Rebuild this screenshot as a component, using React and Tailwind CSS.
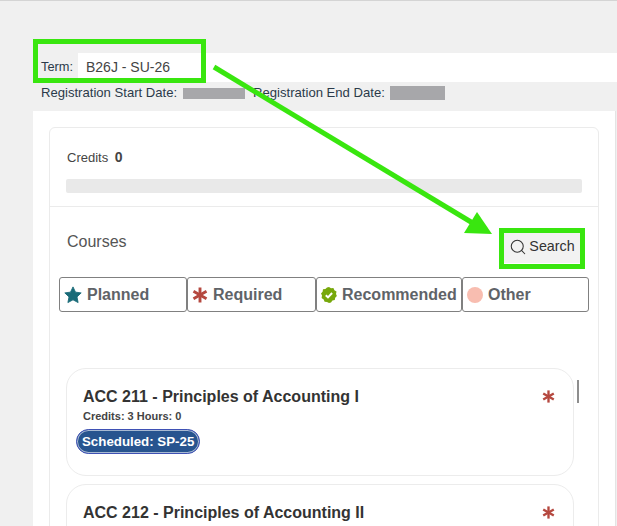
import React from "react";
import { Search } from "lucide-react";

function StarIcon() {
  return (
    <svg width="18" height="18" viewBox="0 0 24 24" className="shrink-0">
      <path
        d="M12 1.2l3.3 7 7.6 1-5.6 5.3 1.5 7.6L12 18.4l-6.8 3.7 1.5-7.6L1.100 9.200l7.600-1z"
        fill="#1a6b78"
        stroke="#1a6b78"
        strokeWidth="1.200"
        strokeLinejoin="round"
      />
    </svg>
  );
}

function AsteriskIcon({ size = 16 }) {
  return (
    <svg width={size} height={size} viewBox="0 0 16 16" className="shrink-0">
      <g stroke="#b5483f" strokeWidth="2.900">
        <path d="M8 0.500v15" />
        <path d="M1.500 4.200l13 7.600" />
        <path d="M14.500 4.200l-13 7.600" />
      </g>
    </svg>
  );
}

function BadgeIcon() {
  return (
    <svg width="16" height="16" viewBox="0 0 16 16" className="shrink-0">
      <path
        d="M8 0l2 1.300 2.400-.2 1 2.200 2.100 1.200-.5 2.400.9 2.100-1.700 1.700-.4 2.400-2.400.5L10 15.500 8 16l-2-.900-2.400-.4-.9-2.300L.6 11l.4-2.400L0 6.500l1.600-1.800.4-2.400 2.400-.4L6 .6z"
        fill="#77a80b"
      />
      <path d="M4.800 8.200l2.200 2.200 4.100-4.400" fill="none" stroke="#fff" strokeWidth="2" />
    </svg>
  );
}

function Tab({ icon, label, className }) {
  return (
    <div className={"flex items-center gap-[5px] h-[35px] border border-[#808080] rounded-[3px] pl-[4px] font-bold text-[16px] text-[#5f6368] " + className}>
      {icon}
      <span>{label}</span>
    </div>
  );
}

function CourseCard({ title, badge }) {
  return (
    <div className="relative h-[108px] shrink-0 rounded-[20px] border border-[#ececec] bg-white pl-[16px] pt-[18px]">
      <div className="flex items-start justify-between pr-[18px]">
        <div className="text-[16px] leading-[20px] font-bold text-[#333333]">{title}</div>
        <div className="mt-[3px]"><AsteriskIcon size={13} /></div>
      </div>
      {badge && (
        <>
          <div className="mt-[2px] text-[11px] leading-[14px] font-bold text-[#444444]">Credits: 3 Hours: 0</div>
          <div className="mt-[6px] -ml-[7px] inline-flex items-center h-[25px] px-[5px] rounded-full border border-[#3f51b5] bg-[#27548f] text-[13.300px] font-bold text-white ring-1 ring-inset ring-white/60">
            {badge}
          </div>
        </>
      )}
    </div>
  );
}

export default function App() {
  return (
    <div
      className="relative h-[526px] w-[617px] overflow-hidden border-t border-[#d4d4d4] bg-[#f0f0f0] text-[#333333]"
      style={{ fontFamily: '"Liberation Sans", Arial, sans-serif' }}
    >
      <div className="pt-[52px]">
        {/* term row */}
        <div className="flex h-[29px] items-stretch pl-[41px]">
          <label className="flex w-[37px] items-center pb-[1px] text-[12.800px] text-[#2b3a4a]">Term:</label>
          <div className="flex flex-1 items-center bg-white pl-[8px] text-[14px] text-[#444444]">B26J - SU-26</div>
        </div>
        {/* registration dates */}
        <div className="flex h-[22px] items-center pl-[41px] text-[13.100px] text-[#2b3a4a]">
          <span>Registration Start Date:</span>
          <span className="ml-[6px] h-[11px] w-[62px] bg-[#a7a7aa]"></span>
          <span className="ml-[8px]">Registration End Date:</span>
          <span className="ml-[5px] h-[14px] w-[55px] bg-[#a7a7aa]"></span>
        </div>
      </div>

      {/* main panel */}
      <div className="ml-[33px] mr-[1px] mt-[7px] h-[420px] border-r border-[#e4e4e4] bg-white pl-[16px] pt-[16px]">
        <div className="w-[550px] h-[500px] rounded-t-[6px] border border-[#ebebeb]">
          <div className="h-[79px] border-b border-[#ebebeb] pl-[17px] pr-[16px] pt-[21px]">
            <div className="text-[13px] leading-[16px] text-[#444444]">
              Credits <span className="ml-[3px] text-[14px] font-bold">0</span>
            </div>
            <div className="-ml-[1px] mt-[13px] h-[14px] rounded-[2px] bg-[#e9e9e9]"></div>
          </div>
          <div className="flex items-start justify-between pl-[17px] pr-[18px]">
            <div className="pt-[25px] text-[16px] leading-[20px] text-[#555555]">Courses</div>
            <button className="mt-[26px] flex h-[30px] w-[76px] items-center justify-center gap-[2px] bg-[#f2f2f2] pb-[2px] text-[14.300px] text-[#333333]">
              <Search size={18} strokeWidth={1.400} />
              Search
            </button>
          </div>
          <div className="ml-[9px] mt-[14px] flex w-[530px]">
            <Tab className="w-[128px]" icon={<StarIcon />} label="Planned" />
            <Tab className="w-[129px]" icon={<AsteriskIcon />} label="Required" />
            <Tab className="w-[146px]" icon={<BadgeIcon />} label="Recommended" />
            <Tab className="w-[127px]" icon={<span className="h-[16px] w-[16px] rounded-full bg-[#f8bdb0]"></span>} label="Other" />
          </div>
          <div className="relative ml-[16px] mt-[56px] flex w-[508px] flex-col gap-[8px]">
            <CourseCard title="ACC 211 - Principles of Accounting I" badge="Scheduled: SP-25" />
            <CourseCard title="ACC 212 - Principles of Accounting II" />
            <div className="absolute left-[511px] top-[12px] h-[23px] w-[2px] bg-[#8e8e8e]"></div>
          </div>
        </div>
      </div>

      {/* annotation overlay */}
      <div className="absolute left-[33px] top-[38px] h-[44px] w-[173px] border-[5px] border-[#39e60f]"></div>
      <div className="absolute left-[499px] top-[227px] h-[41px] w-[86px] border-[5px] border-[#39e60f]"></div>
      <svg className="absolute left-0 top-0" width="617" height="526" viewBox="0 0 617 526" fill="none">
        <path d="M214 66L476 224" stroke="#39e60f" strokeWidth="5" />
        <path d="M477 211L492 233L464 232Z" fill="#39e60f" />
      </svg>
    </div>
  );
}
